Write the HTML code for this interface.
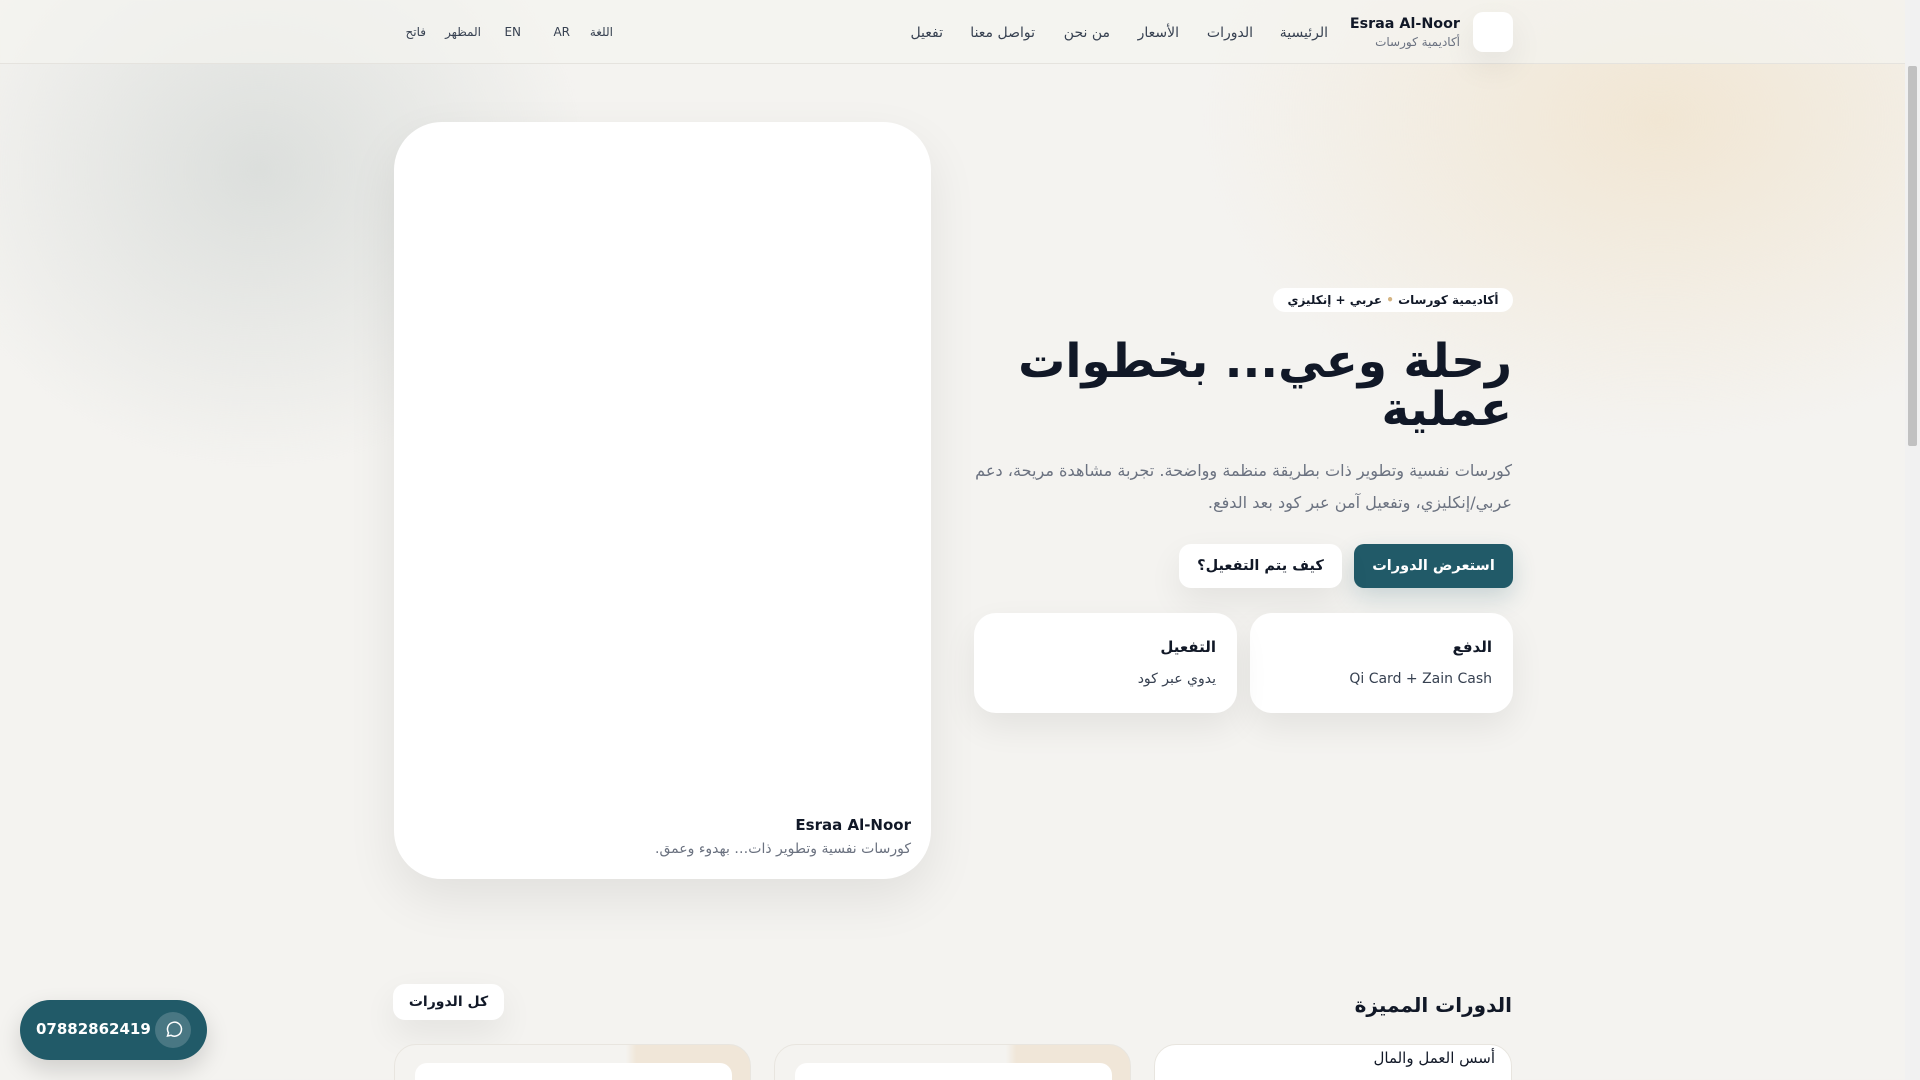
<!DOCTYPE html>
<html lang="ar" dir="rtl"><head><meta charset="utf-8">
<style>
*{box-sizing:border-box;margin:0;padding:0}
html,body{width:1920px;height:1080px;overflow:hidden}
body{font-family:"DejaVu Sans","Liberation Sans","Noto Sans CJK SC",sans-serif;color:#111827;position:relative;
background:
radial-gradient(ellipse 330px 300px at 260px 170px,rgba(200,206,204,.55),rgba(200,206,204,0) 100%),
radial-gradient(ellipse 460px 320px at 1660px 120px,rgba(240,225,200,.7),rgba(240,225,200,0) 100%),
#f4f3f0;}
.a{position:absolute}
header{position:absolute;left:0;top:0;width:1905px;height:64px;border-bottom:1px solid #e5e3de;background:rgba(244,243,240,.7)}
.nav{font-size:14px;color:#374151;top:25px;white-space:nowrap}
.sm{font-size:12px;color:#374151;top:25px}
.card{background:#fff;border-radius:22px;box-shadow:0 14px 34px rgba(0,0,0,.07)}
.sb{position:absolute;right:0;top:0;width:15px;height:1080px;background:#f1f1f1}
.sb div{position:absolute;left:3px;top:66px;width:9px;height:380px;background:#c1c1c1;border-radius:2px}
</style></head><body>
<header>
<div class="a card" style="left:1473px;top:12px;width:40px;height:40px;border-radius:10px"></div>
<div class="a" style="right:445px;top:16px;font-size:14.3px;font-weight:bold">Esraa Al-Noor</div>
<div class="a" style="right:445px;top:35px;font-size:12px;color:#6b7280">أكاديمية كورسات</div>
<div class="a nav" style="right:577px">الرئيسية</div>
<div class="a nav" style="right:652px">الدورات</div>
<div class="a nav" style="right:726px">الأسعار</div>
<div class="a nav" style="right:795px">من نحن</div>
<div class="a nav" style="right:870px">تواصل معنا</div>
<div class="a nav" style="right:962px">تفعيل</div>
<div class="a sm" style="right:1292px">اللغة</div>
<div class="a sm" style="right:1335px">AR</div>
<div class="a sm" style="right:1384px">EN</div>
<div class="a sm" style="right:1424px">المظهر</div>
<div class="a sm" style="right:1479px">فاتح</div>
</header>

<div class="a" style="left:394px;top:122px;width:537px;height:757px;background:#fff;border-radius:48px;box-shadow:0 20px 50px rgba(0,0,0,.08)">
<div class="a" style="right:20px;top:694px;font-size:15px;font-weight:bold">Esraa Al-Noor</div>
<div class="a" style="right:20px;top:719px;font-size:14px;color:#6b7280;white-space:nowrap">كورسات نفسية وتطوير ذات… بهدوء وعمق.</div>
</div>

<div class="a" style="left:1273px;top:288px;width:240px;height:24px;background:#fff;border-radius:12px;font-size:12px;font-weight:bold;text-align:center;line-height:24px;white-space:nowrap">أكاديمية كورسات <span style="color:#d4b483">•</span> عربي + إنكليزي</div>
<div class="a" style="right:408px;top:338px;width:600px;text-align:right;font-size:47px;font-weight:bold;line-height:48px">رحلة وعي... بخطوات<br>عملية</div>
<div class="a" style="right:408px;top:455px;width:555px;text-align:right;font-size:16.1px;color:#6b7280;line-height:32px">كورسات نفسية وتطوير ذات بطريقة منظمة وواضحة. تجربة مشاهدة مريحة، دعم عربي/إنكليزي، وتفعيل آمن عبر كود بعد الدفع.</div>
<div class="a" style="left:1354px;top:544px;width:159px;height:44px;background:#215a68;color:#fff;border-radius:10px;font-size:14.5px;font-weight:bold;text-align:center;line-height:44px;box-shadow:0 10px 24px rgba(33,90,104,.2)">استعرض الدورات</div>
<div class="a card" style="left:1179px;top:544px;width:163px;height:44px;border-radius:12px;font-size:14.5px;font-weight:bold;text-align:center;line-height:44px">كيف يتم التفعيل؟</div>
<div class="a card" style="left:1250px;top:613px;width:263px;height:100px">
<div class="a" style="right:21px;top:25px;font-size:15px;font-weight:bold">الدفع</div>
<div class="a" style="right:21px;top:58px;font-size:14px;color:#374151;white-space:nowrap">Qi Card + Zain Cash</div></div>
<div class="a card" style="left:974px;top:613px;width:263px;height:100px">
<div class="a" style="right:21px;top:25px;font-size:15px;font-weight:bold">التفعيل</div>
<div class="a" style="right:21px;top:58px;font-size:14px;color:#374151">يدوي عبر كود</div></div>

<div class="a" style="right:408px;top:993px;font-size:20px;font-weight:bold">الدورات المميزة</div>
<div class="a card" style="left:393px;top:984px;width:111px;height:36px;border-radius:12px;font-size:14px;font-weight:bold;text-align:center;line-height:36px">كل الدورات</div>

<div class="a" style="left:394px;top:1044px;width:357px;height:60px;border-radius:22px;background:linear-gradient(90deg,#f4f3f0 0%,#f4f3f0 65%,#f0e6d8 68%,#f0e6d8 100%);border:1px solid #e8e5df"><div class="a" style="left:20px;top:18px;width:317px;height:40px;background:#fff;border-radius:12px"></div></div>
<div class="a" style="left:774px;top:1044px;width:357px;height:60px;border-radius:22px;background:linear-gradient(90deg,#f4f3f0 0%,#f4f3f0 65%,#f0e6d8 68%,#f0e6d8 100%);border:1px solid #e8e5df"><div class="a" style="left:20px;top:18px;width:317px;height:40px;background:#fff;border-radius:12px"></div></div>
<div class="a" style="left:1154px;top:1044px;width:358px;height:60px;border-radius:22px;background:#fff;border:1px solid #e8e5df">
<div class="a" style="right:16px;top:4px;font-size:15px;white-space:nowrap">أسس العمل والمال</div></div>

<div class="a" style="left:20px;top:1000px;width:187px;height:60px;border-radius:30px;background:#215a68;box-shadow:0 10px 24px rgba(0,0,0,.15)">
<div class="a" style="left:16px;top:20px;font-size:15px;font-weight:bold;color:#fff;direction:ltr">07882862419</div>
<div class="a" style="left:135px;top:12px;width:36px;height:36px;border-radius:18px;background:rgba(255,255,255,.18)">
<svg width="36" height="36" viewBox="0 0 36 36"><path d="M12.5 24l1-3.2a7 7 0 1 1 2.6 2.5z" fill="none" stroke="#fff" stroke-width="1.5"/></svg></div></div>

<div class="sb"><div></div></div>
</body></html>
